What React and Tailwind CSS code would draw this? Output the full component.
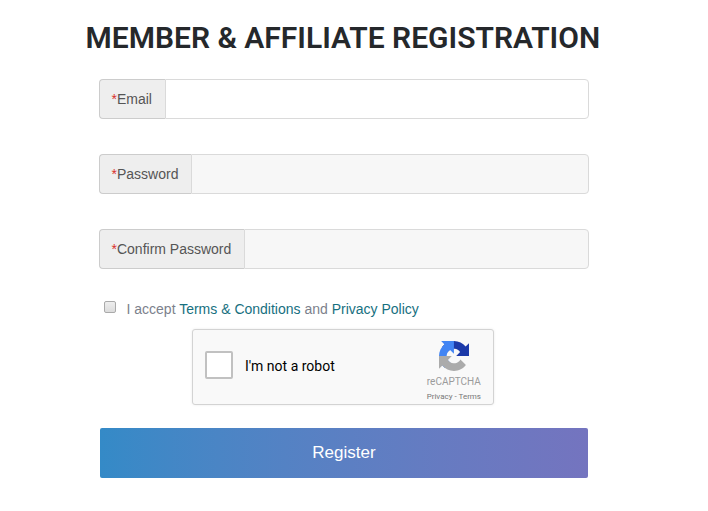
import { useState } from "react";

const fields = [
  { id: "email", label: "Email", type: "email", bg: "bg-white", addon: "w-[66px]" },
  { id: "password", label: "Password", type: "password", bg: "bg-[#f7f7f7]", addon: "w-[92px]" },
  { id: "confirm", label: "Confirm Password", type: "password", bg: "bg-[#f7f7f7]", addon: "w-[145px]" },
];

const RecaptchaLogo = () => (
  <svg viewBox="0 0 64 64" className="w-[30px] h-[30px]">
    <path
      fill="#1c3aa9"
      d="M64 31.955l-.033-1.37V4.687l-7.16 7.16C50.948 4.674 42.033.093 32.05.093c-10.4 0-19.622 4.96-25.458 12.64l11.736 11.86a15.55 15.55 0 0 1 4.754-5.334c2.05-1.6 4.952-2.906 8.968-2.906.485 0 .86.057 1.135.163 4.976.393 9.288 3.14 11.828 7.124l-8.307 8.307L64 31.953"
    />
    <path
      fill="#4285f4"
      d="M31.862.094l-1.37.033H4.594l7.16 7.16C4.58 13.147 0 22.06 0 32.046c0 10.4 4.96 19.622 12.64 25.458L24.5 45.768a15.55 15.55 0 0 1-5.334-4.754c-1.6-2.05-2.906-4.952-2.906-8.968 0-.485.057-.86.163-1.135.393-4.976 3.14-9.288 7.124-11.828l8.307 8.307L31.86.095"
    />
    <path
      fill="#ababab"
      d="M.001 32.045l.033 1.37v25.898l7.16-7.16c5.86 7.173 14.774 11.754 24.76 11.754 10.4 0 19.622-4.96 25.458-12.64l-11.736-11.86a15.55 15.55 0 0 1-4.754 5.334c-2.05 1.6-4.952 2.906-8.968 2.906-.485 0-.86-.057-1.135-.163-4.976-.393-9.288-3.14-11.828-7.124l8.307-8.307c-10.522.04-22.4.066-27.295-.005"
    />
  </svg>
);

const App = () => {
  const [accepted, setAccepted] = useState(false);
  const [verified, setVerified] = useState(false);

  return (
    <div className="bg-white h-[511px] overflow-hidden font-['Liberation_Sans',Arial,sans-serif]">
      <h1 className="pl-[85.5px] pt-[18px] text-[30px] leading-[39px] font-semibold whitespace-nowrap text-[#25282b] font-['Roboto',sans-serif]">
        MEMBER &amp; AFFILIATE REGISTRATION
      </h1>

      <form className="ml-[99px] mt-[22px] w-[490px]" onSubmit={(e) => e.preventDefault()}>
        {/* FIELDS */}
        <div className="flex flex-col gap-[35px]">
          {fields.map((f) => (
            <div key={f.id} className="flex h-10">
              <label
                htmlFor={f.id}
                className={`flex items-center shrink-0 pl-[11.5px] text-sm text-[#555] bg-[#eee] border border-r-0 border-[#ccc] rounded-l whitespace-nowrap ${f.addon}`}
              >
                <span className="text-[#d9302c]">*</span>
                {f.label}
              </label>
              <input
                id={f.id}
                type={f.type}
                className={`flex-1 min-w-0 px-3 text-sm border border-[#dadada] rounded-r outline-none ${f.bg}`}
              />
            </div>
          ))}
        </div>

        {/* TERMS */}
        <div className="flex items-center mt-[30px] h-5 pl-[5px] text-sm text-[#7c818c]">
          <input
            type="checkbox"
            aria-label="I accept"
            checked={accepted}
            onChange={(e) => setAccepted(e.target.checked)}
            className="appearance-none size-3 mr-[10.5px] -mt-1 border border-[#aaa] rounded-xs bg-linear-to-b from-[#eee] to-[#dcdcdc] checked:bg-[#31708f]"
          />
          <p className="whitespace-pre">
            I accept <a href="#terms" className="text-[#17707f]">Terms &amp; Conditions</a> and{" "}
            <a href="#privacy" className="text-[#17707f]">Privacy Policy</a>
          </p>
        </div>

        {/* RECAPTCHA */}
        <div className="flex ml-[93px] mt-[10px] w-[302px] h-[76px] bg-[#f9f9f9] border border-[#d3d3d3] rounded-[3px] shadow-[0_0_3px_rgba(0,0,0,0.08)] font-['Roboto',sans-serif]">
          <button
            type="button"
            aria-label="I'm not a robot"
            onClick={() => setVerified(!verified)}
            className={`size-7 ml-3 mt-[21px] border-2 border-[#c1c1c1] rounded-xs ${verified ? "bg-green-500" : "bg-white"}`}
          />
          <span className="ml-3 mt-[26px] text-sm leading-5 text-black">I'm not a robot</span>
          <div className="ml-auto mr-3 pt-[11px] flex flex-col items-center text-[#9b9b9b]">
            <RecaptchaLogo />
            <span className="mt-[5px] text-[10px] leading-3">reCAPTCHA</span>
            <span className="mt-1 text-[8px] leading-[10px] text-[#777]">Privacy - Terms</span>
          </div>
        </div>

        <button
          type="submit"
          className="block mt-[23px] ml-px w-[488px] h-[50px] rounded-xs text-[17px] text-white bg-linear-to-r from-[#348ac7] to-[#7474bf]"
        >
          Register
        </button>
      </form>
    </div>
  );
};

export default App;
